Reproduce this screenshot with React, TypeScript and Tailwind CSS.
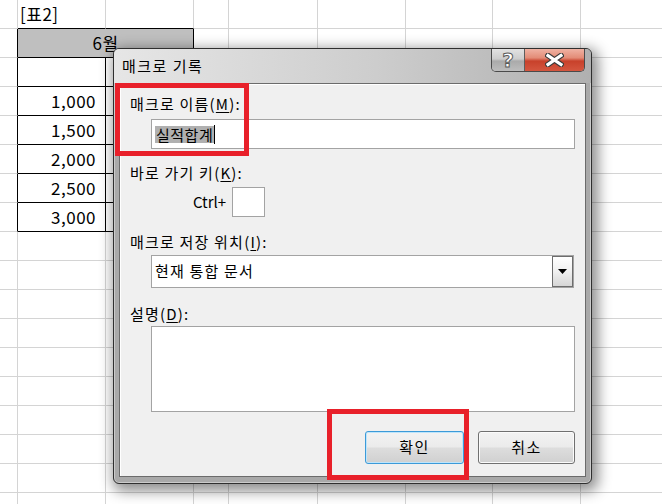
import React from "react";

const COLS = [18, 88, 88, 35, 89, 88, 87, 88];
const NUMS: Record<number, string> = { 3: "1,000", 4: "1,500", 5: "2,000", 6: "2,500", 7: "3,000" };

function SheetRow({ r }: { r: number }) {
  const inTable = r >= 1 && r <= 7;
  return (
    <div className="flex h-[29px]">
      <div
        className={
          inTable
            ? "w-[18px] shrink-0 border-r border-b border-r-black border-b-[#d4d4d4]"
            : "w-[18px] shrink-0 border-r border-b border-[#d4d4d4]"
        }
      />
      {r === 1 ? (
        <div className="w-[176px] shrink-0 border-r border-b border-black bg-[#bfbfbf] flex items-center justify-center text-[17px] tracking-[0.5px]">
          6월
        </div>
      ) : (
        [1, 2].map((c) => (
          <div
            key={c}
            className={
              inTable
                ? "w-[88px] shrink-0 border-r border-b border-black flex items-center justify-end pr-[9px] text-[17px] tracking-[0.5px]"
                : r === 0
                ? "w-[88px] shrink-0 border-r border-b border-r-[#d4d4d4] border-b-black flex items-center text-[17px] tracking-[0.5px] whitespace-nowrap"
                : "w-[88px] shrink-0 border-r border-b border-[#d4d4d4]"
            }
          >
            {r === 0 && c === 1 && <span className="pl-[2px]">[표2]</span>}
            {c === 1 && NUMS[r]}
          </div>
        ))
      )}
      {COLS.slice(3).map((w, i) => (
        <div key={i} style={{ width: w }} className="shrink-0 border-r border-b border-[#d4d4d4]" />
      ))}
      <div className="flex-1 border-b border-[#d4d4d4]" />
    </div>
  );
}

function Label({ text, mnemonic, className }: { text: string; mnemonic: string; className: string }) {
  return (
    <div className={`pl-[10px] h-[20px] leading-[20px] text-[15px] tracking-[1.2px] ${className}`}>
      {text}(<span className="underline underline-offset-2">{mnemonic}</span>):
    </div>
  );
}

export default function App() {
  return (
    <div className="relative w-[662px] h-[504px] overflow-hidden bg-white text-black font-['Noto_Sans_CJK_KR','Noto_Sans',sans-serif]">
      {/* sheet */}
      <div className="flex flex-col">
        {Array.from({ length: 18 }).map((_, r) => (
          <SheetRow key={r} r={r} />
        ))}
      </div>

      {/* dialog */}
      <div className="absolute left-[113px] top-[48px] w-[479px] h-[436px] flex flex-col rounded-[6px] border border-[#2f2f2f] bg-[#a9a9a9] shadow-[inset_0_0_0_1px_rgba(255,255,255,0.4),3px_4px_14px_3px_rgba(0,0,0,0.45)]">
        <div className="h-[34px] flex items-start rounded-t-[5px] bg-[linear-gradient(to_right,#e6e6e6,#cdcdcd_55%,#b0b0b0)]">
          <div className="pl-[8px] pt-[7px] leading-[20px] text-[15px] tracking-[1.5px]">매크로 기록</div>
          <div className="ml-auto mr-[6px] flex h-[23px] rounded-b-[5px] border border-t-0 border-[#4a4a4a] overflow-hidden">
            <div className="w-[33px] border-r border-[#5d5d5d] flex items-center justify-center bg-[linear-gradient(to_bottom,#e2e2e2_0%,#cdcdcd_45%,#aaaaaa_55%,#bdbdbd_100%)]">
              <span className="font-['DejaVu_Sans',sans-serif] font-bold text-[20px] leading-none text-white [-webkit-text-stroke:1px_#5a5a5a]">?</span>
            </div>
            <div className="w-[59px] flex items-center justify-center bg-[linear-gradient(to_bottom,#efb2a3_0%,#e38c77_40%,#c8412b_55%,#d4563f_100%)]">
              <svg width="19" height="14" viewBox="0 0 19 14">
                <path d="M3 2.5 L16 11.5 M16 2.5 L3 11.5" stroke="#3a3a3a" strokeWidth="5.5" strokeLinecap="square" />
                <path d="M3 2.5 L16 11.5 M16 2.5 L3 11.5" stroke="#ffffff" strokeWidth="3.2" strokeLinecap="square" />
              </svg>
            </div>
          </div>
        </div>

        <div className="mx-[5px] mb-[6px] flex-1 flex flex-col border border-[#6b6b6b] bg-[#f0f0f0] shadow-[inset_1px_1px_0_#ffffff]">
          <Label text="매크로 이름" mnemonic="M" className="mt-[10px]" />
          <div className="mt-[5px] ml-[31px] w-[424px] h-[30px] border border-[#a3a3a3] bg-white flex items-center pl-[3px]">
            <span className="bg-[#b0b0b0] text-[15px] leading-[17px] tracking-[0.5px] px-[1px]">실적합계</span>
            <span className="w-px h-[19px] bg-black" />
          </div>

          <Label text="바로 가기 키" mnemonic="K" className="mt-[14px]" />
          <div className="mt-[4px] flex items-center">
            <span className="ml-[73px] w-[39px] text-[15px]">Ctrl+</span>
            <div className="w-[33px] h-[30px] border border-[#a3a3a3] bg-white" />
          </div>

          <Label text="매크로 저장 위치" mnemonic="I" className="mt-[15px]" />
          <div className="relative mt-[3px] ml-[31px] w-[423px] h-[33px] border border-[#a3a3a3] bg-white flex items-center pl-[3px] text-[15px] tracking-[1.2px]">
            현재 통합 문서
            <div className="absolute right-0 top-0 bottom-0 w-[21px] border border-[#6d6d6d] bg-[linear-gradient(to_bottom,#ffffff,#f0f0f0_50%,#d6d6d6)] flex items-center justify-center">
              <svg width="9" height="5" viewBox="0 0 9 5">
                <path d="M0 0 H9 L4.5 5 Z" fill="#000" />
              </svg>
            </div>
          </div>

          <Label text="설명" mnemonic="D" className="mt-[16px]" />
          <div className="mt-[2px] ml-[31px] w-[424px] h-[86px] border border-[#a3a3a3] bg-white" />

          <div className="mt-[19px] flex justify-end gap-[14px] pr-[10px]">
            <button className="w-[99px] h-[33px] rounded-[3px] border border-[#3c9ad8] shadow-[inset_0_0_0_1px_#bfe5fb] bg-[linear-gradient(to_bottom,#f3f3f3_0%,#ebebeb_48%,#dddddd_52%,#d0d0d0_100%)] text-[15px] tracking-[1.5px]">
              확인
            </button>
            <button className="w-[97px] h-[33px] rounded-[3px] border border-[#707070] shadow-[inset_0_0_0_1px_#fbfbfb] bg-[linear-gradient(to_bottom,#f3f3f3_0%,#ebebeb_48%,#dddddd_52%,#d0d0d0_100%)] text-[15px] tracking-[1.5px]">
              취소
            </button>
          </div>
        </div>
      </div>

      {/* highlight boxes */}
      <div className="absolute left-[115px] top-[83px] w-[134px] h-[73px] border-[5px] border-[#e8202a]" />
      <div className="absolute left-[327px] top-[409px] w-[142px] h-[71px] border-[5px] border-[#e8202a]" />
    </div>
  );
}
